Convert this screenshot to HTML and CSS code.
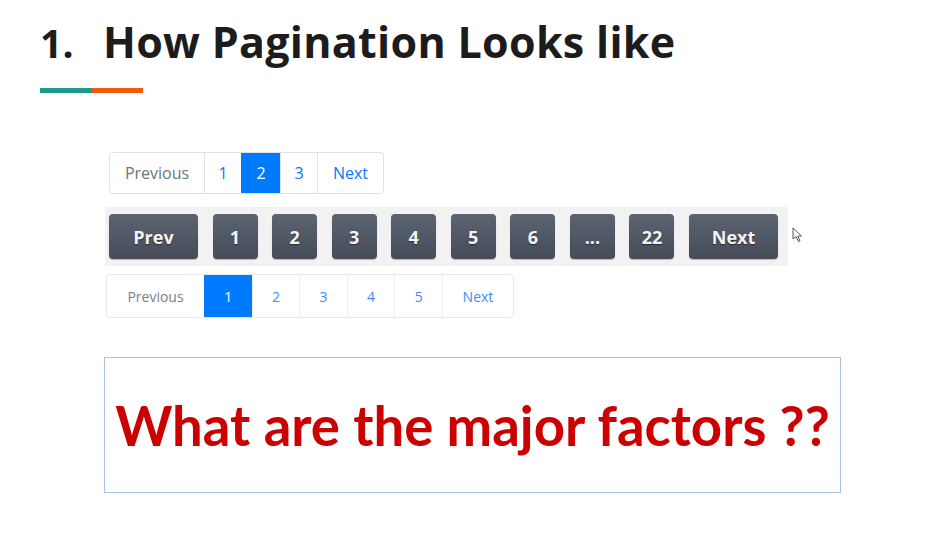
FILE: index.html
```html
<!DOCTYPE html>
<html>
<head>
<meta charset="utf-8">
<link rel="stylesheet" href="styles.css">
</head>
<body>
<header class="head">
  <h1 class="title"><span class="num">1.</span>How Pagination Looks like</h1>
  <div class="bar"><span class="teal"></span><span class="orange"></span></div>
</header>
<main class="examples">
  <nav class="pg-a">
    <span class="a-item muted">Previous</span>
    <span class="a-item">1</span>
    <span class="a-item active">2</span>
    <span class="a-item">3</span>
    <span class="a-item">Next</span>
  </nav>
  <div class="pg-b-wrap">
    <nav class="pg-b">
      <span class="b-btn wide">Prev</span>
      <span class="b-btn">1</span>
      <span class="b-btn">2</span>
      <span class="b-btn">3</span>
      <span class="b-btn">4</span>
      <span class="b-btn">5</span>
      <span class="b-btn">6</span>
      <span class="b-btn">...</span>
      <span class="b-btn">22</span>
      <span class="b-btn wide">Next</span>
    </nav>
    <svg class="cursor" width="11" height="16" viewBox="0 0 11 16"><path d="M1 1 L1 12 L4 9.5 L6.5 14.5 L8 13.8 L5.7 9 L9.5 9 Z" fill="#fff" stroke="#555" stroke-width="1"/></svg>
  </div>
  <nav class="pg-c">
    <span class="c-item muted">Previous</span>
    <span class="c-item active">1</span>
    <span class="c-item">2</span>
    <span class="c-item">3</span>
    <span class="c-item">4</span>
    <span class="c-item">5</span>
    <span class="c-item next">Next</span>
  </nav>
  <section class="question">
    <p>What are the major factors ??</p>
  </section>
</main>
</body>
</html>
```
FILE: styles.css
```css
* { box-sizing: border-box; }
html, body { margin: 0; padding: 0; background: #fff; }
body { width: 940px; height: 534px; overflow: hidden; font-family: "Open Sans", sans-serif; }

.head { padding: 13px 0 0 40px; }
.title {
  margin: 0;
  font-family: "Open Sans", sans-serif;
  font-weight: 700;
  font-size: 43px;
  line-height: 58px;
  color: #1c1c1c;
  letter-spacing: 0.3px;
}
.num { display: inline-block; width: 63px; font-size: 39px; }
.bar { display: flex; margin-top: 16px; height: 5px; width: 103px; }
.teal { flex: 0 0 52px; background: #1a9a88; }
.orange { flex: 1; background: #f05a0a; }

.examples { padding: 59px 0 0 104px; display: flex; flex-direction: column; align-items: flex-start; }

.pg-a {
  display: flex;
  margin-left: 5px;
  height: 42px;
  border: 1px solid #dee2e6;
  border-radius: 4px;
  overflow: hidden;
  font-family: "Open Sans", sans-serif;
  font-size: 16px;
}
.a-item {
  display: flex; align-items: center; justify-content: center;
  padding: 0 12px;
  min-width: 37px;
  color: #007bff;
  border-left: 1px solid #dee2e6;
}
.a-item:first-child { border-left: 0; width: 94px; }
.a-item:last-child { width: 66px; }
.a-item.muted { color: #6c757d; }
.a-item.active { background: #007bff; color: #fff; border-left-color: #007bff; width: 39px; }

.pg-b-wrap { display: flex; align-items: center; margin-top: 13px; }
.pg-b {
  display: flex;
  gap: 14.6px;
  background: #f2f2f3;
  padding: 7px 10px 7px 4px;
  margin-left: 1px;
  width: 683px;
}
.b-btn {
  display: flex; align-items: center; justify-content: center;
  width: 45px; height: 45px;
  border-radius: 4px;
  background: linear-gradient(#5c6472, #454c58);
  box-shadow: 0 1px 1px rgba(0,0,0,0.25);
  color: #f4f4f4;
  font-family: "Open Sans", sans-serif;
  font-weight: 700;
  font-size: 18px;
  text-shadow: 0 1px 1px rgba(0,0,0,0.5);
}
.b-btn.wide { width: 89px; }
.cursor { margin-left: 4px; margin-top: -4px; }

.pg-c {
  display: flex;
  margin-top: 8px;
  margin-left: 2px;
  height: 44px;
  border: 1px solid #e6e8eb;
  border-radius: 4px;
  overflow: hidden;
  font-family: "Open Sans", sans-serif;
  font-size: 14px;
}
.c-item {
  display: flex; align-items: center; justify-content: center;
  width: 47.6px;
  color: #3f8cf5;
  border-left: 1px solid #eceef0;
}
.c-item:first-child { border-left: 0; width: 97px; }
.c-item.muted { color: #7a7f85; }
.c-item.active { background: #007bff; color: #fff; border-left-color: #007bff; }
.c-item.next { width: 71px; }

.question {
  margin-top: 39px;
  width: 737px;
  height: 136px;
  border: 1px solid #a9c4e8;
  display: flex; align-items: center; justify-content: center;
}
.question p {
  margin: 0;
  font-family: Lato, sans-serif;
  font-weight: 700;
  font-size: 54.5px;
  color: #cc0000;
}
```
